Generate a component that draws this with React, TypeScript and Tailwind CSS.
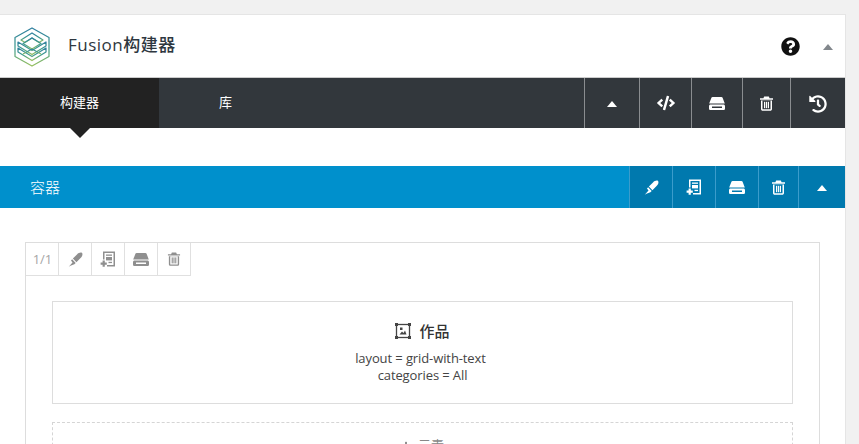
import React from "react";
import { FaCode, FaHistory, FaQuestionCircle, FaPlus } from "react-icons/fa";

const FONT = "font-['Open_Sans','Noto_Sans_CJK_SC',sans-serif]";

function Pen({ size = 15 }: { size?: number }) {
  return (
    <svg width={size} height={size} viewBox="0 0 16 16" fill="currentColor">
      <path d="M9.6 2.6 C11.2 0.8 13.8 0 15 1 C16 2.2 15.2 4.8 13.4 6.4 L9 10.8 L5.2 7 Z" />
      <path d="M4.4 7.8 L8.2 11.6 L6.8 13 L2.6 14.6 L0.8 15.6 L4.8 11.2 L3.2 9 Z" />
    </svg>
  );
}

function Clone({ size = 16 }: { size?: number }) {
  return (
    <svg width={size} height={size} viewBox="0 0 16 16" fill="currentColor">
      <path d="M3 0.5 H15 V15.5 H7 V14 H13.5 V2 H4.5 V8.5 H3 Z" />
      <rect x="6" y="3.5" width="6" height="1.3" />
      <rect x="6" y="6" width="6" height="3.4" />
      <rect x="8.5" y="10.8" width="3.5" height="1.3" />
      <path d="M2.6 9.5 H4.8 V11.5 H6.8 V13.7 H4.8 V15.7 H2.6 V13.7 H0.6 V11.5 H2.6 Z" />
    </svg>
  );
}

function Drive({ w = 16, h = 13 }: { w?: number; h?: number }) {
  return (
    <svg width={w} height={h} viewBox="0 0 16 13" fill="currentColor">
      <path d="M3.6 0 H12.4 C13 0 13.4 0.3 13.6 0.8 L15.8 6.4 H0.2 L2.4 0.8 C2.6 0.3 3 0 3.6 0 Z" />
      <path fillRule="evenodd" d="M1.6 7.4 H14.4 C15.3 7.4 16 8.1 16 9 V11.4 C16 12.3 15.3 13 14.4 13 H1.6 C0.7 13 0 12.3 0 11.4 V9 C0 8.1 0.7 7.4 1.6 7.4 Z M3 9.4 V11 H13 V9.4 Z" />
    </svg>
  );
}

function Trash({ size = 15 }: { size?: number }) {
  return (
    <svg width={size} height={size} viewBox="0 0 15 15" fill="currentColor">
      <path d="M5.2 0.5 H9.8 L10.6 2.3 H14 V3.8 H1 V2.3 H4.4 Z" />
      <path fillRule="evenodd" d="M2 4.6 H13 V13 C13 14 12.2 14.8 11.2 14.8 H3.8 C2.8 14.8 2 14 2 13 Z M3.5 4.8 V13.3 H11.5 V4.8 Z" />
      <rect x="5" y="5.8" width="1.2" height="6.4" />
      <rect x="6.9" y="5.8" width="1.2" height="6.4" />
      <rect x="8.8" y="5.8" width="1.2" height="6.4" />
    </svg>
  );
}

function Up({ className = "" }: { className?: string }) {
  return <span className={`block w-0 h-0 border-x-[5px] border-x-transparent border-b-[6px] mt-[2px] ${className}`} />;
}

function Logo() {
  return (
    <svg width="38" height="40" viewBox="0 0 38 40" fill="none" strokeWidth="1.25" strokeLinejoin="round">
      <defs>
        <linearGradient id="lg" x1="0" y1="0" x2="0" y2="1">
          <stop offset="0" stopColor="#2f7f9f" />
          <stop offset="0.55" stopColor="#3f9c8d" />
          <stop offset="1" stopColor="#97bf5e" />
        </linearGradient>
      </defs>
      <g stroke="url(#lg)">
        <path d="M19 1 L36 10.5 V29.5 L19 39 L2 29.5 V10.5 Z" />
        <path d="M8 13 L19 6 L30 13 L26 15.5 L19 11 L12 15.5 Z" />
        <path d="M19 11 L28 16.5 L19 22 L10 16.5 Z" />
        <path d="M5 15 L19 23.5 L33 15 V19 L19 27.5 L5 19 Z" />
        <path d="M5 21 L19 29.5 L33 21 V25 L19 33.5 L5 25 Z" />
        <path d="M10 27 L19 22 M28 27 L19 22" />
      </g>
    </svg>
  );
}

function Element() {
  return (
    <svg width="16" height="16" viewBox="0 0 16 16" fill="none" stroke="#444" strokeWidth="1.3">
      <rect x="1.5" y="1.5" width="13" height="13" />
      <g fill="#444" stroke="none">
        <rect x="0" y="0" width="3" height="3" />
        <rect x="13" y="0" width="3" height="3" />
        <rect x="0" y="13" width="3" height="3" />
        <rect x="13" y="13" width="3" height="3" />
        <rect x="5" y="4.5" width="2.5" height="2.5" />
        <path d="M4.5 11.5 L7 8.5 L8.5 10 L10 7.5 L11.5 11.5 Z" />
      </g>
    </svg>
  );
}

function DarkBtn({ w, children }: { w: string; children: React.ReactNode }) {
  return <div className={`${w} h-full flex items-center justify-center border-l border-[#8a8d90] text-white`}>{children}</div>;
}

function BlueBtn({ w, children }: { w: string; children: React.ReactNode }) {
  return <div className={`${w} h-full flex items-center justify-center border-l border-[#3b9ccb] text-white`}>{children}</div>;
}

function GreyBtn({ children, w = "w-[33px]" }: { children: React.ReactNode; w?: string }) {
  return <div className={`${w} h-full flex items-center justify-center border-r border-[#e0e0e0] text-[#8f8f8f]`}>{children}</div>;
}

export default function App() {
  return (
    <div className={`${FONT} w-[859px] h-[444px] overflow-hidden bg-[#f1f1f1] pt-[14px]`}>
      <div className="w-[846px] border-r border-[#e5e5e5] border-t bg-white h-[430px] overflow-hidden">
        <div className="h-[62px] flex items-center pl-[13px] pr-[12px]">
          <div className="pt-[2px]"><Logo /></div>
          <span className="ml-[17px] mb-[2px] text-[17px] font-medium text-[#2e3740] tracking-[0.5px]">Fusion构建器</span>
          <div className="ml-auto flex items-center">
            <FaQuestionCircle size={19} className="text-[#111]" />
            <Up className="ml-[23px] border-b-[#82878c]" />
          </div>
        </div>
        <div className="h-[51px] border-t border-[#ccc] flex bg-[#32373c] relative">
          <div className="w-[159px] bg-[#222] flex items-center justify-center text-white text-[13px] relative">
            构建器
            <span className="absolute left-[70px] top-[50px] w-0 h-0 border-x-[10px] border-x-transparent border-t-[10px] border-t-[#222]" />
          </div>
          <div className="w-[133px] flex items-center justify-center text-white text-[13px]">库</div>
          <div className="ml-auto flex h-full">
            <DarkBtn w="w-[55px]"><Up className="border-b-white" /></DarkBtn>
            <DarkBtn w="w-[52px]"><FaCode size={18} /></DarkBtn>
            <DarkBtn w="w-[51px]"><Drive /></DarkBtn>
            <DarkBtn w="w-[48px]"><Trash /></DarkBtn>
            <DarkBtn w="w-[55px]"><FaHistory size={18} className="mt-[2px]" /></DarkBtn>
          </div>
        </div>
        <div className="mt-[38px] h-[42px] bg-[#0090cc] flex items-center">
          <span className="ml-[30px] mt-[1px] text-[15px] font-light text-white">容器</span>
          <div className="ml-auto flex h-full bg-[#0079ae]">
            <BlueBtn w="w-[43px]"><Pen /></BlueBtn>
            <BlueBtn w="w-[43px]"><Clone /></BlueBtn>
            <BlueBtn w="w-[43px]"><Drive /></BlueBtn>
            <BlueBtn w="w-[40px]"><Trash /></BlueBtn>
            <BlueBtn w="w-[47px]"><Up className="border-b-white" /></BlueBtn>
          </div>
        </div>
        <div className="mt-[34px] ml-[25px] w-[795px] border border-[#ddd] h-[300px]">
          <div className="h-[33px] w-[165px] flex border-b border-[#e0e0e0]">
            <GreyBtn><span className="text-[13px] text-[#a5a5a5] mt-[2px] ml-[1px]">1/1</span></GreyBtn>
            <GreyBtn><Pen /></GreyBtn>
            <GreyBtn><Clone /></GreyBtn>
            <GreyBtn><Drive /></GreyBtn>
            <GreyBtn><Trash size={14} /></GreyBtn>
          </div>
          <div className="mx-[26px] mt-[25px] h-[103px] border border-[#ddd] flex flex-col items-center pt-[18px] text-[#444]">
            <div className="flex items-center gap-[8px] h-[22px] font-medium text-[15px] text-[#333]">
              <Element />
              <span>作品</span>
            </div>
            <div className="mt-[8px] text-[13px] leading-[17px] text-center tracking-[-0.1px]">
              <div className="mr-[4px]">layout = grid-with-text</div>
              <div>categories = All</div>
            </div>
          </div>
          <div className="mx-[26px] mt-[18px] h-[60px] border border-dashed border-[#d5d5d5] flex justify-center pt-[13px] text-[13px] text-[#888]">
            <span className="flex items-center h-[20px] gap-[7px]"><FaPlus size={10} />元素</span>
          </div>
        </div>
      </div>
    </div>
  );
}
